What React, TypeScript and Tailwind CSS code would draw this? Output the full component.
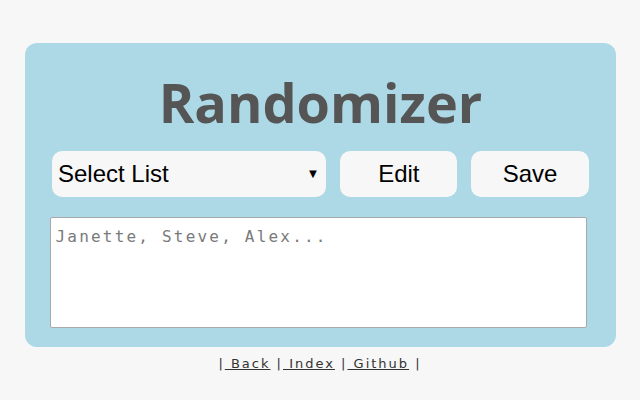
import React from "react";

export default function App() {
  return (
    <div className="w-[640px] h-[400px] bg-[#f7f7f7] flex flex-col items-center overflow-hidden">
      <div className="mt-[43px] ml-[1px] w-[591px] h-[304px] bg-[#add8e6] rounded-[12px] flex flex-col items-center">
        <h1
          className="mt-[28px] h-[63px] leading-[63px] text-[54px] font-bold text-[#555555]"
          style={{ fontFamily: '"Open Sans", "DejaVu Sans", sans-serif' }}
        >
          Randomizer
        </h1>
        <div className="mt-[17px] flex gap-[14px] w-[537px]">
          <div
            className="w-[275px] h-[46px] bg-[#f7f7f7] rounded-[10px] flex items-center justify-between pl-[6px] pr-[7px] text-[24px] text-black"
            style={{ fontFamily: '"Liberation Sans", Arial, sans-serif' }}
          >
            <span>Select List</span>
            <span className="text-[13px]">▼</span>
          </div>
          <div
            className="w-[117px] h-[46px] bg-[#f7f7f7] rounded-[10px] flex items-center justify-center text-[24px] text-black"
            style={{ fontFamily: '"Liberation Sans", Arial, sans-serif' }}
          >
            Edit
          </div>
          <div
            className="w-[118px] h-[46px] bg-[#f7f7f7] rounded-[10px] flex items-center justify-center text-[24px] text-black"
            style={{ fontFamily: '"Liberation Sans", Arial, sans-serif' }}
          >
            Save
          </div>
        </div>
        <div className="mt-[20px] mr-[5px] w-[537px] h-[111px] bg-white border border-[#a9a9a9] rounded-[2px] px-[5px] pt-[6px]">
          <span
            className="text-[16px] tracking-[2.2px] text-[#7a7a7a] leading-[22px]"
            style={{ fontFamily: '"DejaVu Sans Mono", "Liberation Mono", monospace' }}
          >
            Janette, Steve, Alex...
          </span>
        </div>
      </div>
      <div
        className="mt-[7px] text-[13px] tracking-[2px] text-[#333] flex"
        style={{ fontFamily: '"DejaVu Sans", Verdana, sans-serif' }}
      >
        <span>|</span>
        <a className="underline text-[#333]" href="#">{"\u00a0Back"}</a>
        <span>{"\u00a0|"}</span>
        <a className="underline text-[#333]" href="#">{"\u00a0Index"}</a>
        <span>{"\u00a0|"}</span>
        <a className="underline text-[#333]" href="#">{"\u00a0Github"}</a>
        <span>{"\u00a0|"}</span>
      </div>
    </div>
  );
}
